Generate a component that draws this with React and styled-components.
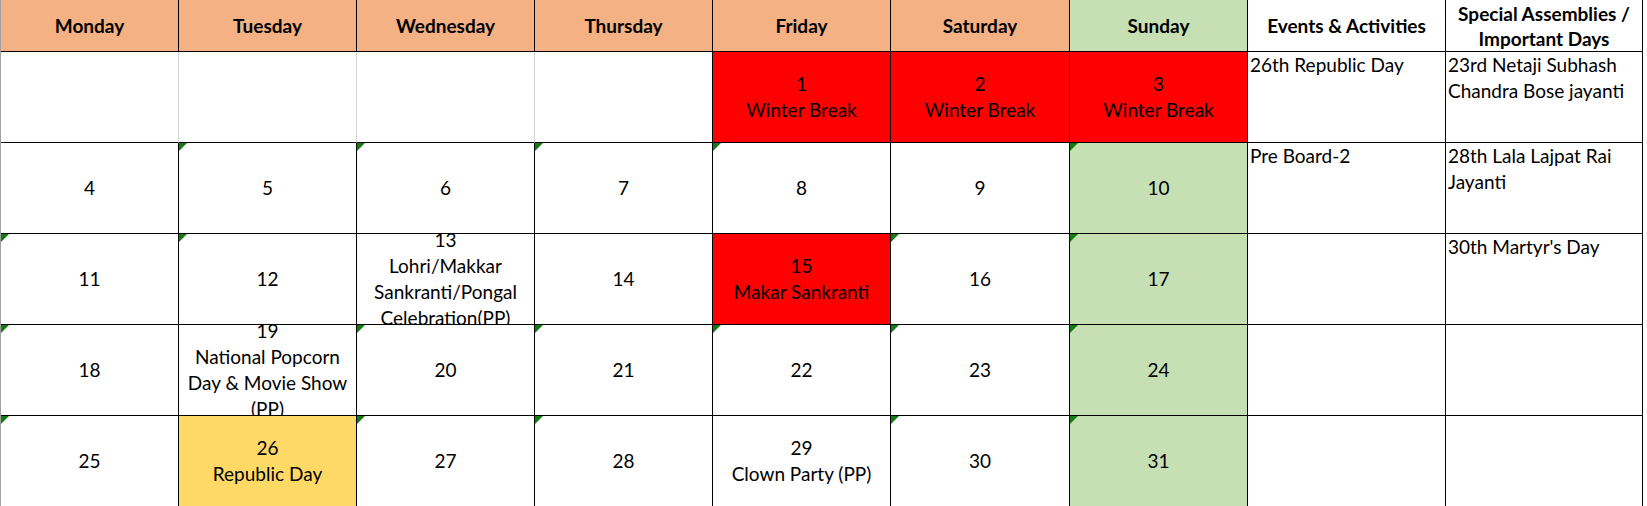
import styled, { createGlobalStyle } from "styled-components";

const RED = "#ff0000";
const YELLOW = "#ffd966";
const GREEN = "#c6e0b4";
const ORANGE = "#f4b183";

const days = [
	{ name: "Monday", bg: ORANGE },
	{ name: "Tuesday", bg: ORANGE },
	{ name: "Wednesday", bg: ORANGE },
	{ name: "Thursday", bg: ORANGE },
	{ name: "Friday", bg: ORANGE },
	{ name: "Saturday", bg: ORANGE },
	{ name: "Sunday", bg: GREEN },
];

// each cell: lines of text, background, and whether excel shows the green flag
const weeks = [
	[
		{ lines: [], light: true },
		{ lines: [], light: true },
		{ lines: [], light: true },
		{ lines: [] },
		{ lines: ["1", "Winter Break"], bg: RED },
		{ lines: ["2", "Winter Break"], bg: RED },
		{ lines: ["3", "Winter Break"], bg: RED },
	],
	[
		{ lines: ["4"] },
		{ lines: ["5"], flag: true },
		{ lines: ["6"], flag: true },
		{ lines: ["7"], flag: true },
		{ lines: ["8"], flag: true },
		{ lines: ["9"] },
		{ lines: ["10"], flag: true, bg: GREEN },
	],
	[
		{ lines: ["11"], flag: true },
		{ lines: ["12"], flag: true },
		{ lines: ["13", "Lohri/Makkar", "Sankranti/Pongal", "Celebration(PP)"] },
		{ lines: ["14"] },
		{ lines: ["15", "Makar Sankranti"], bg: RED },
		{ lines: ["16"], flag: true },
		{ lines: ["17"], flag: true, bg: GREEN },
	],
	[
		{ lines: ["18"], flag: true },
		{ lines: ["19", "National Popcorn", "Day & Movie Show", "(PP)"] },
		{ lines: ["20"], flag: true },
		{ lines: ["21"], flag: true },
		{ lines: ["22"], flag: true },
		{ lines: ["23"], flag: true },
		{ lines: ["24"], flag: true, bg: GREEN },
	],
	[
		{ lines: ["25"], flag: true },
		{ lines: ["26", "Republic Day"], bg: YELLOW },
		{ lines: ["27"], flag: true },
		{ lines: ["28"], flag: true },
		{ lines: ["29", "Clown Party (PP)"] },
		{ lines: ["30"], flag: true },
		{ lines: ["31"], flag: true, bg: GREEN },
	],
];

const events = [["26th Republic Day"], ["Pre Board-2"], [], [], []];
const special = [
	["23rd Netaji Subhash", "Chandra Bose jayanti"],
	["28th Lala Lajpat Rai", "Jayanti"],
	["30th Martyr's Day"],
	[],
	[],
];

export default function App() {
	return (
		<>
			<GlobalStyle />
			<Sheet>
				{days.map((d) => (
					<HeadCell key={d.name} $bg={d.bg}>
						{d.name}
					</HeadCell>
				))}
				<HeadCell>Events &amp; Activities</HeadCell>
				<HeadCell>
					<Line>Special Assemblies /</Line>
					<Line>Important Days</Line>
				</HeadCell>

				{weeks.map((week, w) => (
					<Week key={w}>
						{week.map((c, i) => (
							<DayCell key={i} $bg={c.bg} $flag={c.flag} $light={c.light}>
								{c.lines.map((l) => (
									<Line key={l}>{l}</Line>
								))}
							</DayCell>
						))}
						<NoteCell>
							{events[w].map((l) => (
								<Line key={l}>{l}</Line>
							))}
						</NoteCell>
						<NoteCell>
							{special[w].map((l) => (
								<Line key={l}>{l}</Line>
							))}
						</NoteCell>
					</Week>
				))}
			</Sheet>
		</>
	);
}

const GlobalStyle = createGlobalStyle`
	html, body {
		margin: 0;
		padding: 0;
		background: #ffffff;
		overflow: hidden;
	}
`;

const Sheet = styled.div`
	display: grid;
	grid-template-columns: 178px 178px 178px 178px 178px 179px 178px 198px 197px;
	grid-template-rows: 52px repeat(5, 91px);
	width: max-content;
	border-left: 1px solid #a0a0a0;
	font-family: Lato, "Liberation Sans", sans-serif;
	font-size: 19px;
	line-height: 26px;
	color: #000000;
`;

const Week = styled.div`
	display: contents;
`;

const HeadCell = styled.div`
	display: flex;
	flex-direction: column;
	justify-content: center;
	align-items: center;
	text-align: center;
	font-weight: 700;
	line-height: 25px;
	background: ${(p) => p.$bg || "#ffffff"};
	border-right: 1px solid #000000;
	border-bottom: 1px solid #000000;
	overflow: hidden;
`;

const DayCell = styled.div`
	position: relative;
	display: flex;
	flex-direction: column;
	justify-content: center;
	align-items: center;
	text-align: center;
	overflow: hidden;
	background: ${(p) => p.$bg || "#ffffff"};
	border-right: 1px solid ${(p) => (p.$light ? "#d4d4d4" : "#000000")};
	border-bottom: 1px solid #000000;

	&::before {
		content: "";
		display: ${(p) => (p.$flag ? "block" : "none")};
		position: absolute;
		top: 0;
		left: 0;
		width: 0;
		height: 0;
		border-top: 8px solid #127c12;
		border-right: 8px solid transparent;
	}
`;

const NoteCell = styled.div`
	padding-left: 2px;
	text-align: left;
	overflow: hidden;
	background: #ffffff;
	border-right: 1px solid #000000;
	border-bottom: 1px solid #000000;
`;

const Line = styled.span`
	display: block;
	white-space: nowrap;
`;
